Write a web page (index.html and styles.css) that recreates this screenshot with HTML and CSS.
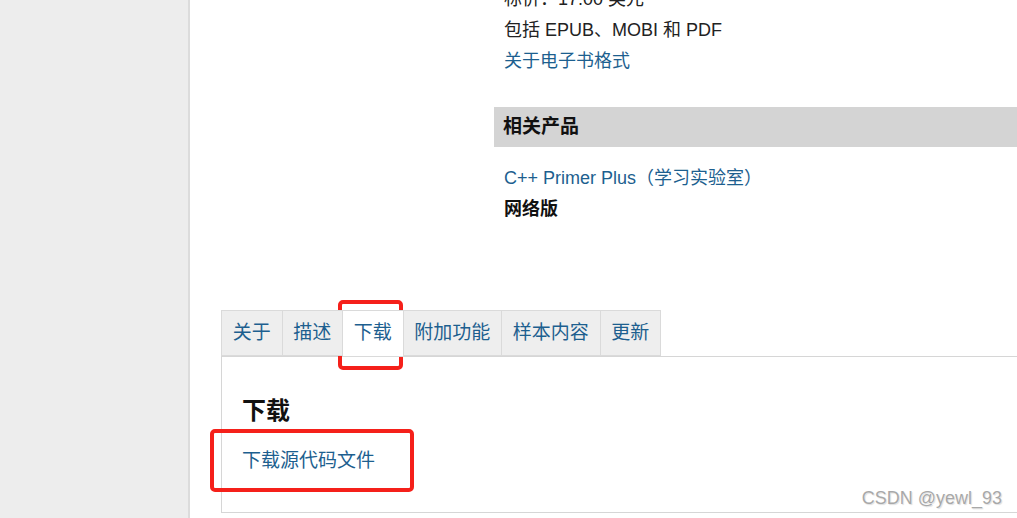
FILE: index.html
```html
<!DOCTYPE html>
<html lang="zh-CN">
<head>
<meta charset="utf-8">
<title>C++ Primer Plus</title>
<link rel="stylesheet" href="styles.css">
</head>
<body>
<div class="page">
  <aside class="sidebar"></aside>
  <main class="main">
    <section class="upper">
      <div class="upper-left"></div>
      <div class="upper-right">
        <div class="ebook">
          <p class="line">标价：17.00 美元</p>
          <p class="line">包括 EPUB、MOBI 和 PDF</p>
          <p class="line"><a class="link" href="#">关于电子书格式</a></p>
        </div>
        <h3 class="related-head">相关产品</h3>
        <div class="related">
          <p class="line"><a class="link" href="#">C++ Primer Plus（学习实验室）</a></p>
          <p class="line strong">网络版</p>
        </div>
      </div>
    </section>

    <section class="tabs-wrap">
      <ul class="tabs">
        <li class="tab">关于</li>
        <li class="tab">描述</li>
        <li class="tab active">下载</li>
        <li class="tab">附加功能</li>
        <li class="tab">样本内容</li>
        <li class="tab">更新</li>
      </ul>
      <div class="panel">
        <h2 class="panel-title">下载</h2>
        <a class="panel-link" href="#">下载源代码文件</a>
      </div>
    </section>
  </main>
</div>
<div class="mark mark-tab"></div>
<div class="mark mark-link"></div>
<div class="watermark">CSDN @yewl_93</div>
</body>
</html>
```

FILE: styles.css
```css
html, body {
  margin: 0;
  padding: 0;
  height: 100%;
  overflow: hidden;
  background: #fff;
}

body {
  font-family: "Liberation Sans", "Noto Sans CJK SC", sans-serif;
  color: #222;
}

.page {
  display: flex;
  height: 518px;
}

.sidebar {
  width: 188px;
  flex: none;
  background: #ededed;
  border-right: 2px solid #dcdcdc;
}

.main {
  flex: 1;
  overflow: hidden;
  padding-left: 31px;
}

.upper {
  display: grid;
  grid-template-columns: 273px 1fr;
  margin-top: -16px;
}

.ebook,
.related {
  padding-left: 10px;
}

.line {
  margin: 0;
  font-size: 18px;
  line-height: 31px;
  white-space: nowrap;
}

.strong {
  font-weight: bold;
  color: #111;
}

.link {
  color: #1d5f8f;
  text-decoration: none;
}

.related-head {
  margin: 30px -2px 0 0;
  height: 40px;
  line-height: 40px;
  background: #d4d4d4;
  padding-left: 9px;
  font-size: 19px;
  font-weight: bold;
  color: #111;
}

.related {
  margin-top: 16px;
}

.tabs-wrap {
  margin-top: 85px;
  margin-right: -3px;
}

.tabs {
  display: flex;
  list-style: none;
  margin: 0;
  padding: 0;
  position: relative;
  z-index: 1;
}

.tab {
  height: 46px;
  box-sizing: border-box;
  padding: 0 10.75px;
  line-height: 44px;
  font-size: 19px;
  color: #1d5f8f;
  background: #eeeeee;
  border: 1px solid #dadada;
  border-left: none;
}

.tab:first-child {
  border-left: 1px solid #dadada;
}

.tab.active {
  background: #fff;
  height: 47px;
  margin-bottom: -1px;
}

.panel {
  border: 1px solid #d6d6d6;
  padding: 39px 20px 36px;
}

.panel-title {
  margin: 0;
  font-size: 24px;
  line-height: 30px;
  font-weight: bold;
  color: #111;
}

.panel-link {
  display: block;
  margin-top: 20px;
  font-size: 19px;
  line-height: 30px;
  color: #1d5f8f;
  text-decoration: none;
}

.mark {
  position: absolute;
  box-sizing: border-box;
  border: 4px solid #f5201a;
  border-radius: 5px;
}

.mark-tab {
  left: 338px;
  top: 300px;
  width: 65px;
  height: 70px;
}

.mark-link {
  left: 210px;
  top: 429px;
  width: 204px;
  height: 63px;
}

.watermark {
  position: absolute;
  right: 15px;
  bottom: 10px;
  font-size: 18px;
  line-height: 20px;
  color: #a8a8a8;
  text-shadow: 0 0 1px #fff, 1px 1px 1px #ddd;
}
```
